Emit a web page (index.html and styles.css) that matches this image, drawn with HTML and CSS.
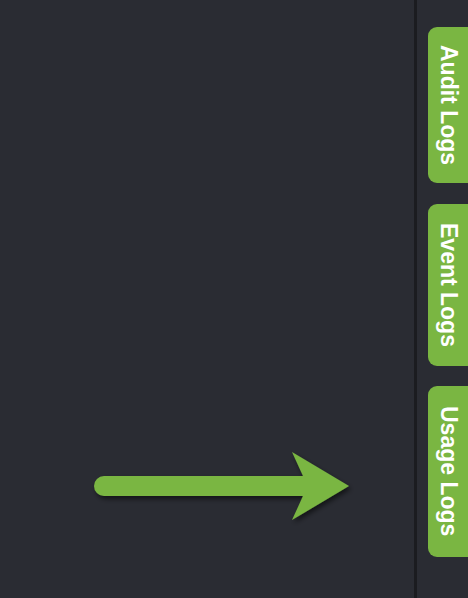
FILE: index.html
```html
<!DOCTYPE html>
<html>
<head>
<meta charset="utf-8">
<link rel="stylesheet" href="styles.css">
</head>
<body>
<div class="app">
  <main class="canvas">
    <svg class="arrow" width="290" height="90" viewBox="0 0 290 90">
      <defs>
        <filter id="sh" x="-10%" y="-30%" width="120%" height="160%">
          <feDropShadow dx="2" dy="3" stdDeviation="2.5" flood-color="#000" flood-opacity="0.55"/>
        </filter>
      </defs>
      <path filter="url(#sh)" fill="#7ab642" d="M24 26 H223 L212 2 L269 36 L212 70 L223 46 H24 A10 10 0 0 1 24 26 Z"/>
    </svg>
  </main>
  <div class="divider"></div>
  <aside class="sidebar">
    <div class="tab tab-audit"><span>Audit Logs</span></div>
    <div class="tab tab-event"><span>Event Logs</span></div>
    <div class="tab tab-usage"><span>Usage Logs</span></div>
  </aside>
</div>
</body>
</html>
```
FILE: styles.css
```css
html, body {
  margin: 0;
  padding: 0;
  background: #2a2c33;
  width: 468px;
  height: 598px;
  overflow: hidden;
}
.app {
  display: flex;
  height: 598px;
}
.canvas {
  flex: 1;
  position: relative;
}
.arrow {
  position: absolute;
  left: 80px;
  top: 450px;
}
.divider {
  width: 3px;
  background: #1b1c20;
}
.sidebar {
  width: 40px;
  padding: 27px 0 0 11px;
  display: flex;
  flex-direction: column;
}
.tab {
  background: #7ab642;
  border-radius: 9px 0 0 9px;
  display: flex;
  justify-content: center;
  align-items: center;
  padding-left: 2px;
}
.tab-audit {
  height: 156px;
}
.tab-event {
  height: 162px;
  margin-top: 21px;
}
.tab-usage {
  height: 171px;
  margin-top: 20px;
}
.tab span {
  writing-mode: vertical-rl;
  font-family: "Liberation Sans", Arial, sans-serif;
  font-weight: bold;
  font-size: 23px;
  color: #ffffff;
  white-space: nowrap;
  line-height: 38px;
}
```
